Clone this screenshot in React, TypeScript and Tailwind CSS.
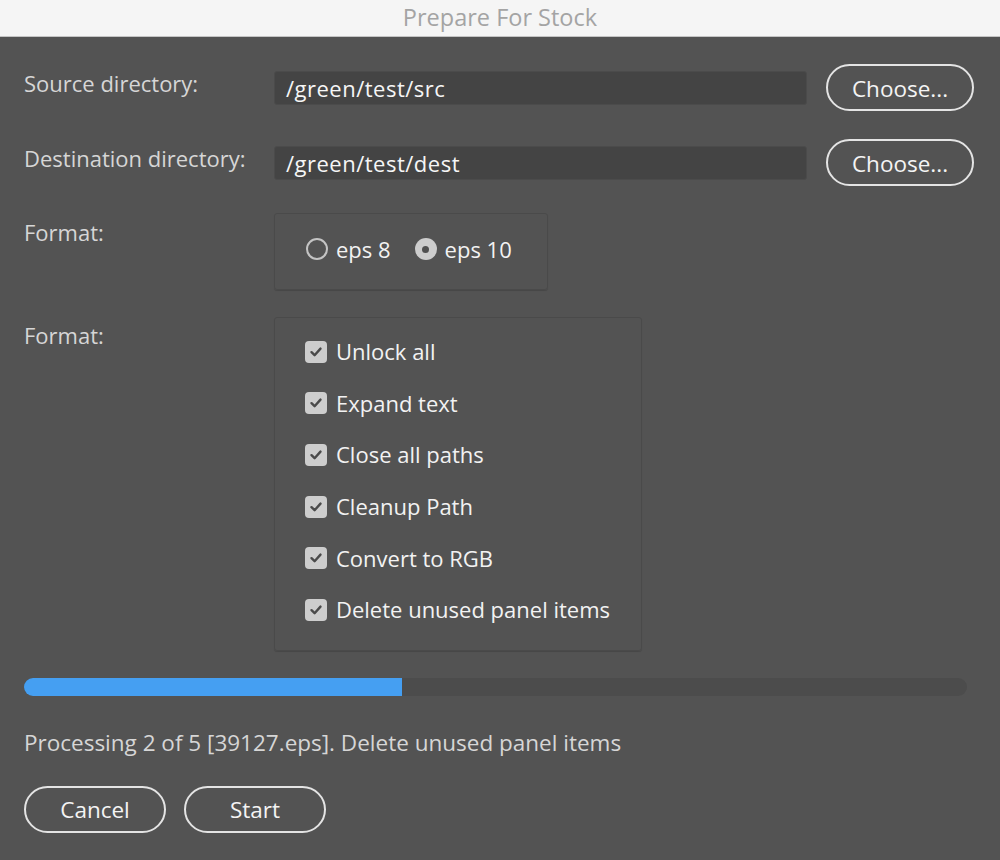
import React from "react";

const font = { fontFamily: '"Open Sans", "Noto Sans", "Liberation Sans", sans-serif' };

function PillButton({ label, w }: { label: string; w: string }) {
  return (
    <button
      className={`${w} h-[47px] rounded-full border-2 border-[#e4e4e4] text-[22.5px] font-medium text-[#f4f4f4] flex items-center justify-center pt-[2px]`}
    >
      {label}
    </button>
  );
}

function Check({ label }: { label: string }) {
  return (
    <div className="flex items-center h-[51.6px]">
      <div className="w-[22px] h-[22px] rounded-[4px] bg-[#cdcdcd] flex items-center justify-center">
        <svg width="14" height="14" viewBox="0 0 14 14">
          <path d="M2.5 7.2 L5.6 10.2 L11.5 3.6" fill="none" stroke="#4a4a4a" strokeWidth="2.4" strokeLinecap="round" strokeLinejoin="round" />
        </svg>
      </div>
      <span className="ml-[9px] text-[22px] font-medium text-[#f2f2f2]">{label}</span>
    </div>
  );
}

export default function App() {
  return (
    <div className="w-[1000px] h-[860px] bg-[#535353] flex flex-col" style={font}>
      <div className="h-[37px] bg-[#f5f5f5] border-b border-[#c4c4c4] flex items-center justify-center">
        <span className="text-[23.5px] text-[#a4a4a4]">Prepare For Stock</span>
      </div>
      <div className="flex flex-col pl-[24px] pt-[27px]">
        <div className="flex items-center h-[47px]">
          <div className="w-[250px] text-[22px] text-[#d6d6d6] -mt-[8px]">Source directory:</div>
          <div className="w-[533px] h-[34px] bg-[#444444] border border-[#4b4b4b] rounded-[3px] flex items-center pl-[11px] pt-[1px] text-[22px] text-[#f6f6f6] tracking-[0.5px]">
            /green/test/src
          </div>
          <div className="ml-[19px]">
            <PillButton label="Choose..." w="w-[148px]" />
          </div>
        </div>
        <div className="flex items-center h-[47px] mt-[28px]">
          <div className="w-[250px] text-[22px] text-[#d6d6d6] -mt-[8px]">Destination directory:</div>
          <div className="w-[533px] h-[34px] bg-[#444444] border border-[#4b4b4b] rounded-[3px] flex items-center pl-[11px] pt-[1px] text-[22px] text-[#f6f6f6] tracking-[0.5px]">
            /green/test/dest
          </div>
          <div className="ml-[19px]">
            <PillButton label="Choose..." w="w-[148px]" />
          </div>
        </div>
        <div className="flex items-start mt-[27px]">
          <div className="w-[250px] text-[22px] text-[#d6d6d6] mt-[3px]">Format:</div>
          <div className="w-[274px] h-[77px] border border-[#4a4a4a] rounded-[3px] shadow-[0_1px_1px_rgba(0,0,0,0.15)] flex items-center pl-[31px] pb-[5px]">
            <div className="w-[22px] h-[22px] rounded-full border-2 border-[#c4c4c4]" />
            <span className="ml-[8px] text-[22px] font-medium text-[#f2f2f2]">eps 8</span>
            <div className="ml-[24px] w-[22px] h-[22px] rounded-full bg-[#cdcdcd] flex items-center justify-center">
              <div className="w-[7px] h-[7px] rounded-full bg-[#505050]" />
            </div>
            <span className="ml-[8px] text-[22px] font-medium text-[#f2f2f2]">eps 10</span>
          </div>
        </div>
        <div className="flex items-start mt-[27px]">
          <div className="w-[250px] text-[22px] text-[#d6d6d6] mt-[2px]">Format:</div>
          <div className="w-[368px] h-[334px] border border-[#4a4a4a] rounded-[3px] shadow-[0_1px_1px_rgba(0,0,0,0.15)] flex flex-col pl-[30px] pt-[8px]">
            <Check label="Unlock all" />
            <Check label="Expand text" />
            <Check label="Close all paths" />
            <Check label="Cleanup Path" />
            <Check label="Convert to RGB" />
            <Check label="Delete unused panel items" />
          </div>
        </div>
        <div className="mt-[27px] w-[943px] h-[18px] rounded-full bg-[#4c4c4c] overflow-hidden flex">
          <div className="w-[378px] h-full bg-[#459ff2]" />
        </div>
        <div className="mt-[30px] text-[22.5px] text-[#d6d6d6]">
          Processing 2 of 5 [39127.eps]. Delete unused panel items
        </div>
        <div className="flex mt-[26px] gap-[18px]">
          <PillButton label="Cancel" w="w-[142px]" />
          <PillButton label="Start" w="w-[142px]" />
        </div>
      </div>
    </div>
  );
}
